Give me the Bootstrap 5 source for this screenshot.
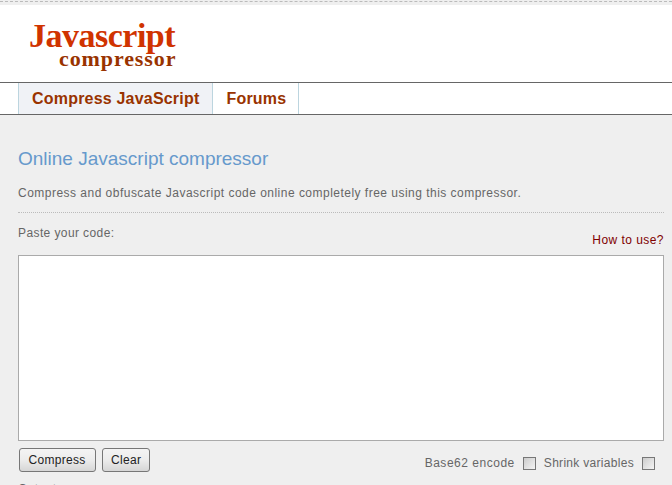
<!DOCTYPE html>
<html lang="en"><head><meta charset="utf-8"><title>Javascript compressor</title>
<link href="https://cdn.jsdelivr.net/npm/bootstrap@5.3.0/dist/css/bootstrap.min.css" rel="stylesheet">
<style>
html,body{height:485px;overflow:hidden}
body{background:#efefef;font-family:"Liberation Sans",Arial,sans-serif;font-size:12px;color:#666}
.topline{height:4px;border-top:1px dashed #bbb;margin-top:1px}
.brand{background:#fff;height:77px;padding:16px 0 0 29px}
.logo-a{font-family:"Liberation Serif",serif;font-weight:700;font-size:34px;line-height:29px;color:#d03300;letter-spacing:-.5px}
.logo-b{font-family:"Liberation Serif",serif;font-weight:700;font-size:22px;line-height:17px;color:#993300;padding-left:30px;letter-spacing:.9px}
.tabs{background:#fff;height:33px;border-top:1px solid #666;border-bottom:1px solid #666;padding-left:18px}
.tabs a{display:block;height:31px;padding:0 13px;font-size:16px;font-weight:700;letter-spacing:.2px;line-height:32px;color:#993300;text-decoration:none;border-right:1px solid #bcd5df}
.tabs li:first-child a{background:#f0f2f6;border-left:1px solid #bcd5df}
.tabs li:last-child a{padding-right:12px}
.content{padding:0 8px 0 18px}
.content h1{font-size:19px;font-weight:400;color:#6699cc;margin:33px 0 0;line-height:21px}
.intro{margin:16px 0 0;line-height:16px;letter-spacing:.48px;padding-bottom:11px;border-bottom:1px dotted #bbb}
.paste{height:42px;line-height:16px;letter-spacing:.4px}
.paste span{padding-top:12px}
.paste a{color:#800000;text-decoration:none;padding-top:19px;letter-spacing:.45px}
.code{display:block;width:646px;height:186px;border:1px solid #aaa;background:#fff;border-radius:0;resize:none;outline:0;padding:2px}
.opts{height:36px;padding-top:7px;padding-right:9px}
.pushbtn{height:24px;font-size:12px;letter-spacing:.3px;line-height:22px;color:#222;background:linear-gradient(#f4f4f4,#ececec 50%,#d6d6d6);border:1px solid #777;border-radius:3px}
.pushbtn.first{margin-left:1px;padding:0 9px 0 8px;width:77px}
.pushbtn.second{padding:0 8px;width:48px}
.btnset{gap:6px}
.optset{padding-top:6px}
.optset .lbl-a{letter-spacing:.52px}
.optset .lbl-b{letter-spacing:.3px}
.tick{appearance:none;width:13px;height:13px;margin:0;background:linear-gradient(135deg,#ccc,#f4f4f4);border:1px solid #777;display:block}
.after{line-height:16px;letter-spacing:.4px;margin-top:4px}
</style></head>
<body>
<div class="topline"></div>
<header class="brand">
<div class="logo-a">Javascript</div>
<div class="logo-b">compressor</div>
</header>
<ul class="tabs nav">
<li class="nav-item"><a href="#">Compress JavaScript</a></li>
<li class="nav-item"><a href="#">Forums</a></li>
</ul>
<main class="content">
<h1>Online Javascript compressor</h1>
<p class="intro">Compress and obfuscate Javascript code online completely free using this compressor.</p>
<div class="paste d-flex justify-content-between"><span>Paste your code:</span><a href="#">How to use?</a></div>
<textarea class="code" aria-label="Paste your code"></textarea>
<div class="opts d-flex align-items-start justify-content-between">
<div class="btnset d-flex"><button class="pushbtn first" type="button">Compress</button><button class="pushbtn second" type="button">Clear</button></div>
<div class="optset d-flex align-items-center"><span class="lbl-a">Base62 encode</span><input class="tick ms-2" type="checkbox" aria-label="Base62 encode"><span class="lbl-b ms-2">Shrink variables</span><input class="tick ms-2" type="checkbox" aria-label="Shrink variables"></div>
</div>
<div class="after">Output:</div>
</main>
</body></html>
